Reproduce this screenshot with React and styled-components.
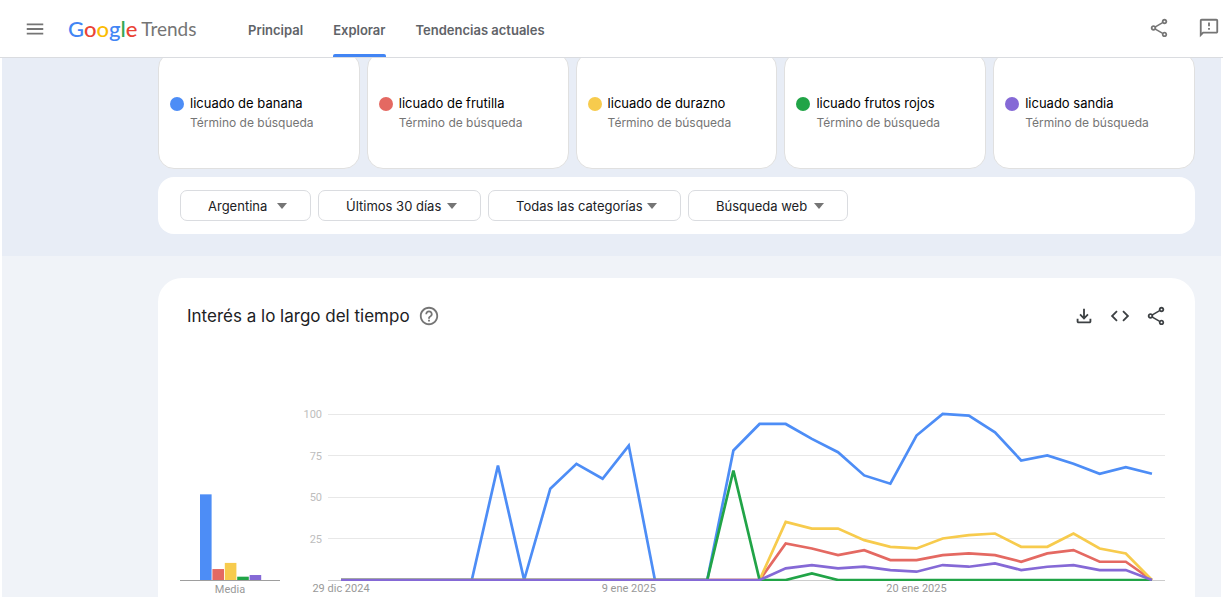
import React from 'react';
import styled, {createGlobalStyle} from 'styled-components';
import {
    MdCode,
    MdHelpOutline,
    MdMenu,
    MdOutlineFeedback,
    MdOutlineFileDownload,
    MdOutlineShare,
} from 'react-icons/md';

const BLUE = '#4d8df6';
const RED = '#e46962';
const YELLOW = '#f7cb4d';
const GREEN = '#21a447';
const PURPLE = '#8569d6';

const zeros = (n) => Array(n).fill(0);

const SERIES = [
    {
        name: 'licuado de banana',
        color: BLUE,
        average: 51.6,
        values: [...zeros(6), 69, 0, 55, 70, 61, 81, 0, 0, 0, 78, 94, 94, 85, 77, 63, 58, 87, 100, 99, 89, 72, 75, 70, 64, 68, 64],
    },
    {
        name: 'licuado de frutilla',
        color: RED,
        average: 6.6,
        values: [...zeros(17), 22, 19, 15, 18, 12, 12, 15, 16, 15, 11, 16, 18, 11, 11, 0],
    },
    {
        name: 'licuado de durazno',
        color: YELLOW,
        average: 10.3,
        values: [...zeros(17), 35, 31, 31, 24, 20, 19, 25, 27, 28, 20, 20, 28, 19, 16, 0],
    },
    {
        name: 'licuado frutos rojos',
        color: GREEN,
        average: 2,
        values: [...zeros(15), 66, 0, 0, 4, ...zeros(13)],
    },
    {
        name: 'licuado sandia',
        color: PURPLE,
        average: 3,
        values: [...zeros(17), 7, 9, 7, 8, 6, 5, 9, 8, 10, 6, 8, 9, 6, 6, 0],
    },
];

const FILTERS = [
    {label: 'Ubicación', value: 'Argentina', width: 131},
    {label: 'Período', value: 'Últimos 30 días', width: 163},
    {label: 'Categoría', value: 'Todas las categorías', width: 193},
    {label: 'Tipo de búsqueda', value: 'Búsqueda web', width: 160},
];

const GlobalStyle = createGlobalStyle`
  * {
    box-sizing: border-box;
  }

  body {
    margin: 0;
    background: #fff;
    font-family: Inter, "Liberation Sans", sans-serif;
    color: #202124;
  }

  h1, h2, p, ul {
    margin: 0;
    padding: 0;
    font-weight: normal;
  }
`;

const Header = styled.header`
  position: sticky;
  top: 0;
  z-index: 2;
  display: flex;
  align-items: stretch;
  height: 58px;
  padding: 0 3px 0 24px;
  border-bottom: 1px solid #dadce0;
  background: #fff;
`;

const IconButton = styled.button`
  display: flex;
  align-items: center;
  align-self: center;
  padding: 0;
  border: none;
  background: none;
  color: ${({$dark}) => ($dark ? '#3c4043' : '#757575')};
  font-size: 22px;
  cursor: pointer;
`;

const Logo = styled.a`
  display: flex;
  gap: 4px;
  width: 150px;
  margin: 0 30px 0 22px;
  font-family: Lato, sans-serif;
  font-size: 19px;
  line-height: 58px;
  color: #757575;
  text-decoration: none;

  b {
    font-size: 22px;
    font-weight: 500;
  }
`;

const Letter = styled.span`
  color: ${({$color}) => $color};
`;

const Nav = styled.nav`
  display: flex;
  gap: 30px;
`;

const NavLink = styled.a`
  display: flex;
  flex-direction: column;
  font-size: 13px;
  font-weight: 600;
  line-height: 20px;
  padding-top: 20px;
  color: #5f6368;
  text-decoration: none;

  &::after {
    content: '';
    height: 3px;
    margin-top: auto;
    border-radius: 2px 2px 0 0;
    background: ${({$active}) => ($active ? '#4285f4' : 'transparent')};
  }
`;

const HeaderActions = styled.div`
  display: flex;
  gap: 28px;
  margin: 0 0 2px auto;
`;

const Hero = styled.section`
  margin: 0 2px;
  padding: 0 26px 22px 156px;
  background: #e8edf6;
`;

const Terms = styled.ul`
  display: grid;
  grid-template-columns: repeat(5, 1fr);
  gap: 7px;
  margin-top: -6px;
  list-style: none;
`;

const Term = styled.li`
  display: flex;
  gap: 6px;
  height: 117px;
  padding: 40px 8px 0 11px;
  border: 1px solid #e0e0e0;
  border-radius: 16px;
  background: #fff;
`;

const Dot = styled.span`
  flex: none;
  width: 14px;
  height: 14px;
  margin-top: 4px;
  border-radius: 50%;
  background: ${({$color}) => $color};
`;

const TermName = styled.h2`
  font-size: 13px;
  line-height: 20px;
  color: #000;
`;

const TermKind = styled.p`
  font-size: 12px;
  line-height: 20px;
  color: #757575;
`;

const Filters = styled.div`
  display: flex;
  gap: 7px;
  margin-top: 8px;
  padding: 13px 22px;
  border-radius: 16px;
  background: #fff;
`;

const Filter = styled.label`
  display: grid;
  align-items: center;
  width: ${({$width}) => $width}px;

  > * {
    grid-area: 1 / 1;
  }
`;

const Select = styled.select`
  appearance: none;
  width: 100%;
  height: 31px;
  padding: 0 24px 0 27px;
  border: 1px solid #dadce0;
  border-radius: 7px;
  background: #fff;
  font-family: inherit;
  font-size: 13px;
  color: #202124;
`;

const Arrow = styled.svg`
  justify-self: end;
  margin-right: 24px;
  pointer-events: none;
`;

const Body = styled.main`
  margin: 0 2px;
  padding: 22px 26px 0 156px;
  background: #f0f3f8;
`;

const Card = styled.section`
  padding: 26px 28px 0 22px;
  border-radius: 24px 24px 0 0;
  background: #fff;
`;

const CardHeader = styled.div`
  display: flex;
  align-items: center;
  height: 24px;
  padding-left: 7px;

  h1 {
    margin-right: 8px;
    font-size: 17px;
    line-height: 24px;
  }
`;

const CardActions = styled.div`
  display: flex;
  gap: 14px;
  margin-left: auto;
`;

const Charts = styled.div`
  display: flex;
  gap: 20px;
  margin-top: 72px;
  padding-right: 2px;
`;

const AverageSvg = styled.svg`
  flex: none;
  width: 100px;
`;

const TimelineSvg = styled.svg`
  flex: 1;
  min-width: 0;
`;

const AxisText = styled.text`
  font-family: Roboto, sans-serif;
  font-size: 11px;
  fill: ${({$light}) => ($light ? '#bdbdbd' : '#999')};
`;

const BASE = 180;
const yOf = (value) => BASE - value * 1.66;
const xOf = (day) => 41 + day * 26.16;

function AverageChart() {
    return (
        <AverageSvg viewBox="0 0 100 197" role="img" aria-label="Media">
            {SERIES.map(({name, color, average}, i) => (
                <rect key={name} x={20 + i * 12.4} y={yOf(average)} width="11.6" height={average * 1.66} fill={color} />
            ))}
            <path d="M0 180.5h100" stroke="#9e9e9e" />
            <AxisText x="50" y="193" textAnchor="middle">Media</AxisText>
        </AverageSvg>
    );
}

function TimelineChart() {
    return (
        <TimelineSvg viewBox="0 0 865 197" role="img" aria-label="Interés a lo largo del tiempo">
            <clipPath id="plotArea">
                <rect x="28" y="0" width="837" height="181" />
            </clipPath>
            {[100, 75, 50, 25].map((value) => (
                <g key={value}>
                    <path d={`M28 ${Math.floor(yOf(value)) + 0.5}h837`} stroke="#e8e8e8" />
                    <AxisText $light x="22" y={yOf(value) + 4} textAnchor="end">{value}</AxisText>
                </g>
            ))}
            <path d="M28 180.5h837" stroke="#ccc" />
            <g clipPath="url(#plotArea)" fill="none" strokeWidth="2.7">
                {SERIES.map(({name, color, values}) => (
                    <polyline
                        key={name}
                        points={values.map((v, day) => `${xOf(day)},${yOf(v)}`).join(' ')}
                        stroke={color}
                    />
                ))}
            </g>
            <AxisText x={xOf(0)} y="192" textAnchor="middle">29 dic 2024</AxisText>
            <AxisText x={xOf(11)} y="192" textAnchor="middle">9 ene 2025</AxisText>
            <AxisText x={xOf(22)} y="192" textAnchor="middle">20 ene 2025</AxisText>
        </TimelineSvg>
    );
}

export default function App() {
    return (
        <>
            <GlobalStyle />
            <Header>
                <IconButton aria-label="Menú"><MdMenu /></IconButton>
                <Logo href="#" aria-label="Google Trends">
                    <b>
                        <Letter $color="#4285f4">G</Letter>
                        <Letter $color="#ea4335">o</Letter>
                        <Letter $color="#fbbc04">o</Letter>
                        <Letter $color="#4285f4">g</Letter>
                        <Letter $color="#34a853">l</Letter>
                        <Letter $color="#ea4335">e</Letter>
                    </b>
                    <span>Trends</span>
                </Logo>
                <Nav>
                    <NavLink href="#">Principal</NavLink>
                    <NavLink href="#" $active>Explorar</NavLink>
                    <NavLink href="#">Tendencias actuales</NavLink>
                </Nav>
                <HeaderActions>
                    <IconButton aria-label="Compartir"><MdOutlineShare /></IconButton>
                    <IconButton aria-label="Enviar comentarios"><MdOutlineFeedback /></IconButton>
                </HeaderActions>
            </Header>
            <Hero>
                <Terms>
                    {SERIES.map(({name, color}) => (
                        <Term key={name}>
                            <Dot $color={color} />
                            <div>
                                <TermName>{name}</TermName>
                                <TermKind>Término de búsqueda</TermKind>
                            </div>
                        </Term>
                    ))}
                </Terms>
                <Filters>
                    {FILTERS.map(({label, value, width}) => (
                        <Filter key={label} $width={width}>
                            <Select aria-label={label}>
                                <option>{value}</option>
                            </Select>
                            <Arrow width="10" height="6" viewBox="0 0 10 6">
                                <path d="M0 0h10L5 6z" fill="#757575" />
                            </Arrow>
                        </Filter>
                    ))}
                </Filters>
            </Hero>
            <Body>
                <Card>
                    <CardHeader>
                        <h1>Interés a lo largo del tiempo</h1>
                        <IconButton aria-label="Ayuda"><MdHelpOutline /></IconButton>
                        <CardActions>
                            <IconButton $dark aria-label="Descargar"><MdOutlineFileDownload /></IconButton>
                            <IconButton $dark aria-label="Insertar"><MdCode /></IconButton>
                            <IconButton $dark aria-label="Compartir"><MdOutlineShare /></IconButton>
                        </CardActions>
                    </CardHeader>
                    <Charts>
                        <AverageChart />
                        <TimelineChart />
                    </Charts>
                </Card>
            </Body>
        </>
    );
}
